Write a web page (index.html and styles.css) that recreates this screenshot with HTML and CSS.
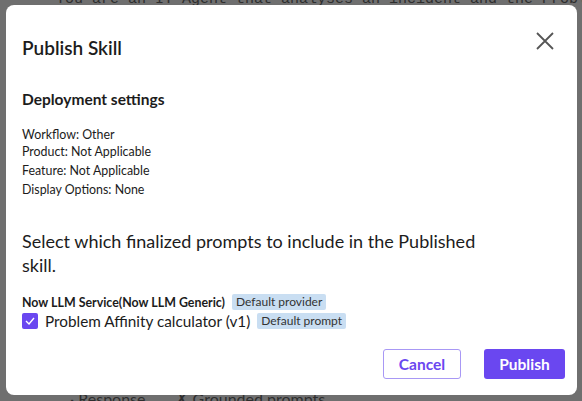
FILE: index.html
```html
<!DOCTYPE html>
<html lang="en">
<head>
  <meta charset="UTF-8">
  <title>Publish Skill</title>
  <link rel="stylesheet" href="styles.css">
</head>
<body>
  <div class="page">
    <p class="page-prompt">You are an IT Agent that analyses an incident and the Problem its related to</p>
    <p class="page-footer"><span>&middot; Response</span><span>&#x2717; Grounded prompts</span></p>
  </div>

  <div class="overlay">
    <section class="modal">
      <header class="modal-header">
        <h2 class="modal-title">Publish Skill</h2>
        <button class="close-btn" aria-label="Close">
          <svg width="18" height="18" viewBox="0 0 18 18">
            <path d="M1 1 L17 17 M17 1 L1 17" stroke="#555" stroke-width="1.8" fill="none" />
          </svg>
        </button>
      </header>

      <div class="modal-body">
        <h3 class="section-title">Deployment settings</h3>
        <div class="settings">
          <p class="settings-group">Workflow: Other<br>Product: Not Applicable</p>
          <p>Feature: Not Applicable</p>
          <p>Display Options: None</p>
        </div>

        <p class="lead">Select which finalized prompts to include in the Published skill.</p>

        <div class="provider">
          <span class="provider-name">Now LLM Service(Now LLM Generic)</span>
          <span class="badge">Default provider</span>
        </div>
        <label class="prompt-row">
          <span class="checkbox">
            <svg width="10" height="8" viewBox="0 0 10 8">
              <path d="M1 4 L4 7 L9 1" stroke="#fff" stroke-width="1.4" fill="none" />
            </svg>
          </span>
          <span class="prompt-name">Problem Affinity calculator (v1)</span>
          <span class="badge">Default prompt</span>
        </label>
      </div>

      <footer class="modal-footer">
        <button class="btn btn-secondary">Cancel</button>
        <button class="btn btn-primary">Publish</button>
      </footer>
    </section>
  </div>
</body>
</html>
```

FILE: styles.css
```css
body {
  margin: 0;
  font-family: Lato, "Noto Sans", sans-serif;
  background: #6f6f6f;
  width: 582px;
  height: 401px;
  overflow: hidden;
  position: relative;
}

.page {
  height: 401px;
  display: flex;
  flex-direction: column;
  justify-content: space-between;
  color: #2e2e2e;
}

.page-prompt {
  margin: -9px 0 0 56px;
  font-family: "Liberation Mono", monospace;
  font-size: 15px;
  white-space: nowrap;
}

.page-footer {
  margin: 0 0 -8px 70px;
  font-size: 16px;
  display: flex;
  gap: 30px;
}

.overlay {
  position: absolute;
  inset: 0;
}

.modal {
  position: absolute;
  left: 6px;
  top: 5px;
  width: 571px;
  height: 390px;
  box-sizing: border-box;
  background: #fff;
  border-radius: 8px;
  padding: 0 12px 0 16px;
  display: flex;
  flex-direction: column;
  color: #1c1c1c;
}

.modal-header {
  display: flex;
  justify-content: space-between;
  align-items: flex-start;
  padding-top: 31px;
}

.modal-title {
  margin: 0;
  font-size: 19px;
  font-weight: 600;
  line-height: 23px;
}

.close-btn {
  background: none;
  border: none;
  padding: 0;
  margin: -4px 11px 0 0;
  cursor: pointer;
}

.modal-body {
  flex: 1;
  padding-top: 31px;
}

.section-title {
  margin: 0 0 17px;
  font-size: 15.5px;
  font-weight: 700;
  line-height: 19px;
}

.settings {
  font-size: 12.4px;
  line-height: 19px;
}

.settings p {
  margin: 0;
}

.settings .settings-group {
  line-height: 17px;
  margin-bottom: 1px;
}

.lead {
  margin: 30px 0 17px;
  max-width: 470px;
  font-size: 18px;
  line-height: 24px;
  font-weight: 400;
}

.provider {
  display: flex;
  align-items: center;
  gap: 7px;
  font-size: 12.4px;
  margin-bottom: 2px;
}

.provider-name {
  font-weight: 700;
}

.badge {
  background: #c9def2;
  color: #333;
  font-size: 12px;
  padding: 1px 4px;
  border-radius: 2px;
  line-height: 14px;
}

.prompt-row {
  display: flex;
  align-items: center;
  gap: 7px;
}

.checkbox {
  width: 16px;
  height: 16px;
  border-radius: 2px;
  background: #6a47f0;
  display: flex;
  align-items: center;
  justify-content: center;
}

.prompt-name {
  font-size: 15.3px;
}

.modal-footer {
  display: flex;
  justify-content: flex-end;
  gap: 23px;
  padding-bottom: 16px;
}

.btn {
  height: 30px;
  font-family: Lato, "Noto Sans", sans-serif;
  font-size: 15.5px;
  font-weight: 700;
  border-radius: 3px;
  cursor: pointer;
}

.btn-secondary {
  width: 78px;
  background: #fff;
  color: #6a47f0;
  border: 1px solid #a898f5;
}

.btn-primary {
  width: 81px;
  background: #6a47f0;
  color: #fff;
  border: none;
}
```
